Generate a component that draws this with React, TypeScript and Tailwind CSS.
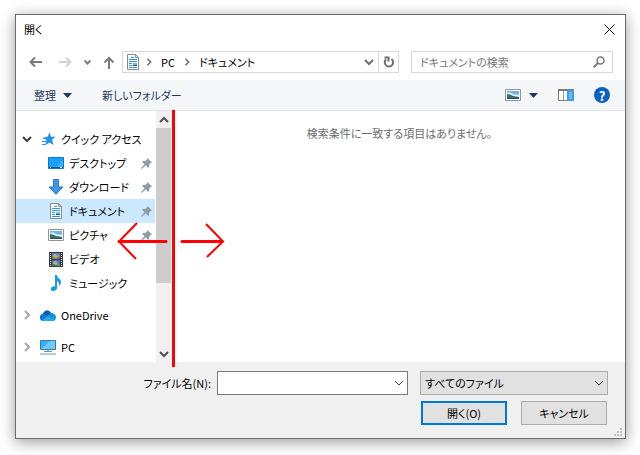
import { FC, ReactNode } from "react";

interface IIcon {
  className?: string;
}
interface IPlace {
  name: string;
  icon: ReactNode;
  pinned?: boolean;
  selected?: boolean;
}

// ******************************************* Icons *******************************************//
const Chevron: FC<IIcon> = ({ className }) => (
  <svg className={className} width="10" height="10" viewBox="0 0 10 10" fill="none" stroke="currentColor">
    <path d="M1 3l4 4 4-4" />
  </svg>
);

const Triangle: FC = () => (
  <svg width="9" height="5" viewBox="0 0 9 5" fill="#1e395b">
    <path d="M0 0h9L4.5 5z" />
  </svg>
);

const DocumentIcon: FC = () => (
  <svg width="16" height="16" viewBox="0 0 16 16">
    <path d="M2.5.5h8l3 3v12h-11z" fill="#fff" stroke="#8a8a8a" />
    <path d="M10.5.5v3h3" fill="none" stroke="#8a8a8a" />
    <path d="M6 3.5h3M4 5.5h5M8 5.5h4M4 7.5h8M4 9.5h3M4 11.5h3M4 13.5h8" stroke="#2b9be0" />
    <path d="M8 9h4v3H8z" fill="#6fb8e6" />
    <path d="M8 11h4v1H8z" fill="#234f70" />
  </svg>
);

const PictureIcon: FC = () => (
  <svg width="16" height="12" viewBox="0 0 16 12">
    <path d="M.5.5h15v11H.5z" fill="#fff" stroke="#949494" />
    <path d="M2 2h12v8H2z" fill="#6fb5e8" />
    <path d="M2 4c3-1 5 0 6 1s4 0 6 1v2H2z" fill="#d9effa" />
    <path d="M2 5c2 0 4 1 6 2l6 1v2H2z" fill="#3e6b5c" />
    <path d="M2 9h12v1H2z" fill="#254f86" />
  </svg>
);

const StarIcon: FC = () => (
  <svg width="16" height="16" viewBox="0 0 16 16">
    <path d="M9.600 1.500l1.400 4.200 4.500.1-3.400 3 1.300 5.200-4.100-2.600-4.300 3 1.500-5L4 6l3.600-.3z" fill="#2093e8" />
    <path d="M3 7.500h3M2 10.500h4M2 13.500h3" stroke="#2093e8" />
  </svg>
);

const DesktopIcon: FC = () => (
  <svg width="16" height="12" viewBox="0 0 16 12">
    <path d="M.5.5h15v11H.5z" fill="#18a0fb" stroke="#0b78c4" />
    <path d="M8 10l7-7v7z" fill="#3db2ff" />
    <path d="M1 10.500h14" stroke="#075b9c" />
    <path d="M2 10.500h1M12 10.500h2" stroke="#d6eeff" />
  </svg>
);

const DownloadIcon: FC = () => (
  <svg width="16" height="16" viewBox="0 0 16 16">
    <path d="M5.500.5h5V8h4.300L8 15.300 1.200 8h4.300z" fill="#3b97e3" stroke="#2a78be" />
  </svg>
);

const VideoIcon: FC = () => (
  <svg width="14" height="15" viewBox="0 0 14 15">
    <path d="M0 0h14v15H0z" fill="#3a3a3a" />
    <path d="M3 1h8v6H3z" fill="#4b86d8" />
    <path d="M3 8h8v6H3z" fill="#3f78c4" />
    <path d="M4 3l3-1 1 2 2-1v3H5z" fill="#e3a63a" />
    <path d="M3 5h3v2H3zM8 12h3v2H8z" fill="#4fa35a" />
    <path d="M4 10l3-1 2 2-2 2H5z" fill="#d9b04a" />
    <path d="M8 5h2v1H8zM4 12h2v1H4z" fill="#b6403b" />
    <path d="M1.500 1v13M12.500 1v13" stroke="#eee" strokeDasharray="1 1" />
  </svg>
);

const MusicIcon: FC = () => (
  <svg width="12" height="16" viewBox="0 0 12 16">
    <path d="M5 0h2c0 3 4 4 4 7 0 2-1 3-2 4 .5-3-.5-4-2-5v7c0 2-2 3-4 3-3 0-3-4 0-4.600.8-.2 1.500 0 2 .2z" fill="#159bf3" />
  </svg>
);

const CloudIcon: FC = () => (
  <svg width="16" height="11" viewBox="0 0 16 11">
    <path d="M3 4C4 0 9-1 11 3c3 0 5 2 5 4.500S14 11 12.500 11H3C1 11 0 9.500 0 7.500S1 4 3 4z" fill="#1490df" />
    <path d="M3 4C4 0 9-1 11 3.200L7 6 3 4z" fill="#0a5fb4" />
    <path d="M3 4l5 2-6.500 4.500C-.5 9-.5 4 3 4z" fill="#0f78d4" />
    <path d="M1.500 10.500L8 6l7 4c-.6.700-1.500 1-2.500 1H3c-.5 0-1-.1-1.500-.5z" fill="#28a8ea" />
  </svg>
);

const PcIcon: FC = () => (
  <svg width="16" height="15" viewBox="0 0 16 15">
    <path d="M.5.5h15v9H.5z" fill="#35b0f5" stroke="#3a7ca5" />
    <path d="M1 9l9-8h5v8z" fill="#6fcbff" />
    <path d="M7 10h2v2H7z" fill="#9db6c4" />
    <path d="M4 11.500h8M0 14h16" stroke="#6e99ae" />
  </svg>
);

const PinIcon: FC = () => (
  <svg width="11" height="11" viewBox="0 0 11 11" fill="#8f9ca6">
    <path d="M6.500 0L11 4.500 9.700 5 8 6.700 8 9.300 7.200 10 4.800 7.300.7 11 0 10.300 3.500 6.200 1 3.800 1.800 3 4.300 3 6 1.300z" />
  </svg>
);

// ******************************************* Data *******************************************//
const places: IPlace[] = [
  { name: "デスクトップ", icon: <DesktopIcon />, pinned: true },
  { name: "ダウンロード", icon: <DownloadIcon />, pinned: true },
  { name: "ドキュメント", icon: <DocumentIcon />, pinned: true, selected: true },
  { name: "ピクチャ", icon: <PictureIcon />, pinned: true },
  { name: "ビデオ", icon: <VideoIcon /> },
  { name: "ミュージック", icon: <MusicIcon /> },
];

// ******************************************* Parts *******************************************//
const TreeRoot: FC<{ name: string; icon: ReactNode; open?: boolean }> = ({ name, icon, open }) => (
  <div className="flex h-6 items-center pl-[6px]">
    <button aria-label={name} className="flex w-[18px] items-center">
      <Chevron className={open ? "stroke-2 text-[#404040]" : "-rotate-90 stroke-2 text-[#a6a6a6]"} />
    </button>
    <span className="flex w-4 justify-center">{icon}</span>
    <span className="ml-[5px]">{name}</span>
  </div>
);

const Place: FC<{ place: IPlace }> = ({ place }) => (
  <li className={`mr-px flex h-6 items-center pl-8 pr-[3px] ${place.selected ? "bg-[#cce8ff]" : ""}`}>
    <span className="flex w-4 justify-center">{place.icon}</span>
    <span className="ml-[5px] flex-1">{place.name}</span>
    {place.pinned && <PinIcon />}
  </li>
);

const TitleBar: FC = () => (
  <header className="flex h-7 items-center justify-between pl-2 pr-[10px]">
    <h1>開く</h1>
    <button aria-label="閉じる">
      <svg width="11" height="11" viewBox="0 0 11 11" stroke="#000">
        <path d="M.5.5l10 10M10.500.5l-10 10" />
      </svg>
    </button>
  </header>
);

const NavBar: FC = () => (
  <div className="flex items-center pb-[7px] pl-[13px] pr-3 pt-2">
    <button aria-label="戻る">
      <svg width="13" height="12" viewBox="0 0 13 12" fill="none" stroke="#7a7a7a" strokeWidth="2">
        <path d="M13 6H2M6 1.500L1.500 6 6 10.500" />
      </svg>
    </button>
    <button aria-label="進む" className="ml-[17px]">
      <svg width="13" height="12" viewBox="0 0 13 12" fill="none" stroke="#d2d2d2" strokeWidth="2">
        <path d="M0 6h11M7 1.500L11.500 6 7 10.500" />
      </svg>
    </button>
    <button aria-label="最近表示した場所" className="ml-3">
      <svg width="7" height="5" viewBox="0 0 7 5" fill="none" stroke="#808080" strokeWidth="2">
        <path d="M.5.5l3 3 3-3" />
      </svg>
    </button>
    <button aria-label="上へ" className="ml-3">
      <svg width="12" height="13" viewBox="0 0 12 13" fill="none" stroke="#7a7a7a" strokeWidth="2">
        <path d="M6 13V2M1.500 6.500L6 2l4.500 4.500" />
      </svg>
    </button>
    <div className="ml-[7px] flex h-[22px] min-w-0 flex-1 items-center border border-[#d9d9d9] pl-[2px]">
      <DocumentIcon />
      <Chevron className="ml-1 w-2 -rotate-90 stroke-2 text-[#707070]" />
      <button className="ml-2">PC</button>
      <Chevron className="ml-2 w-2 -rotate-90 stroke-2 text-[#707070]" />
      <button className="ml-2">ドキュメント</button>
      <button aria-label="以前の場所" className="ml-auto mr-1">
        <Chevron className="stroke-2 text-[#707070]" />
      </button>
      <button aria-label="更新" className="flex h-full w-5 items-center justify-center border-l border-[#d9d9d9]">
        <svg width="12" height="12" viewBox="0 0 12 12" fill="none" stroke="#707070" strokeWidth="2">
          <path d="M8.500 3A4.200 4.200 0 1 1 3 3.300M1.500 1.500h4V5.500" />
        </svg>
      </button>
    </div>
    <label className="ml-3 flex h-[22px] w-[202px] items-center border border-[#d9d9d9] pl-2 pr-[7px]">
      <input
        type="text"
        aria-label="ドキュメントの検索"
        placeholder="ドキュメントの検索"
        className="min-w-0 flex-1 outline-none placeholder:text-[#757575]"
      />
      <svg width="12" height="12" viewBox="0 0 12 12" fill="none" stroke="#7a7a7a">
        <circle cx="7.500" cy="4.500" r="3.500" strokeWidth="1.500" />
        <path d="M5 7L.7 11.300" strokeWidth="2" />
      </svg>
    </label>
  </div>
);

const Toolbar: FC = () => (
  <div className="flex h-[31px] items-center border-b border-[#e4e5e6] bg-[#f5f6f7] pl-[18px] pr-[15px] text-[#1e395b]">
    <button className="flex items-center gap-[7px]">
      整理 <Triangle />
    </button>
    <button className="ml-[30px]">新しいフォルダー</button>
    <button aria-label="表示" className="ml-auto">
      <PictureIcon />
    </button>
    <button aria-label="その他のオプション" className="ml-2">
      <Triangle />
    </button>
    <button aria-label="プレビュー" className="ml-5">
      <svg width="16" height="12" viewBox="0 0 16 12">
        <path d="M.5.5h15v11H.5z" fill="#fff" stroke="#7b7b7b" />
        <path d="M0 0h16v2H0z" fill="#7b7b7b" />
        <path d="M5.500 2v9" stroke="#9a9a9a" />
        <path d="M9 1h7v11H9z" fill="#3d9fea" />
        <path d="M11 3h3v7h-3z" fill="#6bbaf5" />
      </svg>
    </button>
    <button aria-label="ヘルプ" className="ml-5 flex size-4 items-center justify-center rounded-full bg-[#0a63c0] text-[13px] font-bold leading-none text-white">
      ?
    </button>
  </div>
);

const Sidebar: FC = () => (
  <nav className="flex w-[155px] shrink-0">
    <div className="flex flex-1 flex-col gap-2 pb-[3px] pt-4">
      <div>
        <TreeRoot name="クイック アクセス" icon={<StarIcon />} open />
        <ul>
          {places.map((place) => (
            <Place key={place.name} place={place} />
          ))}
        </ul>
      </div>
      <TreeRoot name="OneDrive" icon={<CloudIcon />} />
      <TreeRoot name="PC" icon={<PcIcon />} />
    </div>
    <div className="flex w-[15px] flex-col bg-[#f0f0f0]">
      <button aria-label="上にスクロール" className="flex h-[17px] items-center justify-center">
        <Chevron className="rotate-180 stroke-2 text-[#505050]" />
      </button>
      <div className="h-[155px] bg-[#cdcdcd]" />
      <button aria-label="下にスクロール" className="mt-auto flex h-[17px] items-center justify-center">
        <Chevron className="stroke-2 text-[#505050]" />
      </button>
    </div>
  </nav>
);

// the red guide that shows the pane border can be dragged
const ResizeGuide: FC = () => (
  <svg className="absolute -top-px left-[100px]" width="110" height="257" viewBox="0 0 110 257" fill="none" stroke="#f00">
    <path d="M57.500 0v257" strokeWidth="3" />
    <path d="M50 131.500H3M66 131.500h40" strokeWidth="3" strokeLinecap="round" />
    <path d="M21 113L3 131.500 20 149M90 114l17 17.500L91 147" strokeWidth="2" />
  </svg>
);

const Footer: FC = () => (
  <footer className="relative bg-[#f0f0f0] pb-[13px] pr-[17px] pt-[9px]">
    <div className="flex items-center">
      <label htmlFor="fileName" className="w-[201px] pr-[6px] text-right">
        ファイル名(N):
      </label>
      <div className="flex h-6 min-w-0 flex-1 items-center border border-[#7a7a7a] bg-white pl-1 pr-[3px]">
        <input id="fileName" type="text" className="min-w-0 flex-1 outline-none" />
        <button aria-label="履歴">
          <Chevron className="text-[#404040]" />
        </button>
      </div>
      <div className="relative ml-3">
        <select aria-label="ファイルの種類" className="h-6 w-[188px] appearance-none border border-[#adadad] bg-[#e1e1e1] pl-1">
          <option>すべてのファイル</option>
        </select>
        <Chevron className="pointer-events-none absolute right-1 top-[7px] text-[#404040]" />
      </div>
    </div>
    <div className="mr-px mt-[6px] flex justify-end gap-[14px]">
      <button className="h-6 w-[86px] border-2 border-[#0078d7] bg-[#e1e1e1]">開く(O)</button>
      <button className="h-6 w-[86px] border border-[#adadad] bg-[#e1e1e1]">キャンセル</button>
    </div>
    <svg className="absolute bottom-[2px] right-[3px]" width="8" height="8" viewBox="0 0 8 8" fill="#bfbfbf">
      <path d="M6 0h2v2H6zM3 3h2v2H3zM6 3h2v2H6zM0 6h2v2H0zM3 6h2v2H3zM6 6h2v2H6z" />
    </svg>
  </footer>
);

const App: FC = () => {
  return (
    <div className="bg-white pb-4 pl-[15px] pr-[14px] pt-[14px] font-['Noto_Sans_CJK_JP',sans-serif] text-[11px] leading-4 text-black [font-feature-settings:'palt']">
      <main className="border border-[#6b6b6b] bg-white shadow-[0_3px_14px_rgba(0,0,0,0.4)]">
        <TitleBar />
        <NavBar />
        <Toolbar />
        <div className="relative z-10 flex">
          <Sidebar />
          <p className="flex-1 pl-[3px] pt-[14px] text-center text-[#6d6d6d]">検索条件に一致する項目はありません。</p>
          <ResizeGuide />
        </div>
        <Footer />
      </main>
    </div>
  );
};
export default App;
